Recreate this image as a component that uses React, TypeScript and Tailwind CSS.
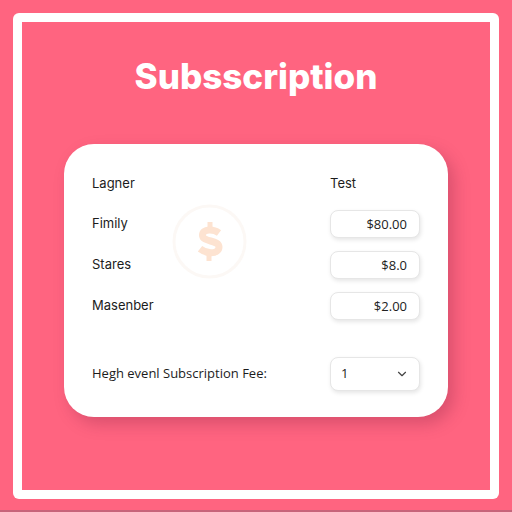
import { ChevronDown } from 'lucide-react';

interface Plan {
  id: string;
  name: string;
  price: string;
}

const plans: Plan[] = [
  { id: 'fimily', name: 'Fimily', price: '$80.00' },
  { id: 'stares', name: 'Stares', price: '$8.0' },
  { id: 'masenber', name: 'Masenber', price: '$2.00' },
];

const fieldClass =
  "w-full rounded-lg border border-[#e6e6e6] bg-white font-['Open_Sans',sans-serif] text-[13px] text-[#222222] shadow-[1px_2px_4px_rgba(0,0,0,0.1)] focus:outline-none focus-visible:ring-2 focus-visible:ring-[#ff6480]";

function DollarBadge() {
  return (
    <svg
      className="pointer-events-none absolute top-[34px] left-20 size-[75px]"
      viewBox="0 0 75 75"
      fill="none"
      aria-hidden="true"
    >
      <circle cx="37.5" cy="37.5" r="35.5" stroke="#fcf8f5" strokeWidth="3" />
      <path d="M38 18v6M37 51v6" stroke="#fde3d1" strokeWidth="5" />
      <path
        d="M47 29c-3-2.200-6.500-3.200-10-3-4 .2-6.500 2.200-6.500 5.200 0 7.300 16.500 4.300 16.500 11.800 0 3.500-3.200 5.800-8 5.800-4 0-7.600-1.300-11-4"
        stroke="#fde3d1"
        strokeWidth="7"
      />
    </svg>
  );
}

export default function App() {
  return (
    <main className="flex min-h-screen flex-col border-b-2 border-[#c7647a] bg-[#ff6480] px-[13px] pt-[13px] pb-[11px] font-[Inter,sans-serif]">
      <div className="flex flex-1 flex-col rounded-md bg-white p-[9px]">
        <div className="flex flex-1 flex-col bg-[#ff6480] px-[42px] pt-8">
          <h1 className="text-center text-[35px] leading-[44px] font-extrabold text-white">
            Subsscription
          </h1>

          <section className="mt-[46px] rounded-[30px] bg-white px-7 pt-[26px] pb-[26px] text-[13px] text-[#1c1c1c] shadow-[6px_7px_16px_rgba(120,30,60,0.28)]">
            <div className="relative flex flex-col gap-[13px]">
              <DollarBadge />
              <div className="grid h-[27px] grid-cols-[1fr_90px] items-center">
                <span>Lagner</span>
                <span>Test</span>
              </div>
              {plans.map((plan) => (
                <div key={plan.id} className="grid grid-cols-[1fr_90px] items-center">
                  <label htmlFor={plan.id}>{plan.name}</label>
                  <input
                    id={plan.id}
                    type="text"
                    defaultValue={plan.price}
                    className={`${fieldClass} h-7 px-3 text-right`}
                  />
                </div>
              ))}
            </div>

            <div className="mt-[37px] grid grid-cols-[1fr_90px] items-center">
              <label htmlFor="fee" className="font-['Open_Sans',sans-serif]">
                Hegh evenl Subscription Fee:
              </label>
              <div className="relative">
                <select id="fee" defaultValue="1" className={`${fieldClass} h-[34px] appearance-none px-[10px]`}>
                  <option value="1">1</option>
                  <option value="2">2</option>
                  <option value="3">3</option>
                </select>
                <ChevronDown
                  className="pointer-events-none absolute top-[10px] right-[11px] size-[14px] text-[#444444]"
                  aria-hidden="true"
                />
              </div>
            </div>
          </section>
        </div>
      </div>
    </main>
  );
}
